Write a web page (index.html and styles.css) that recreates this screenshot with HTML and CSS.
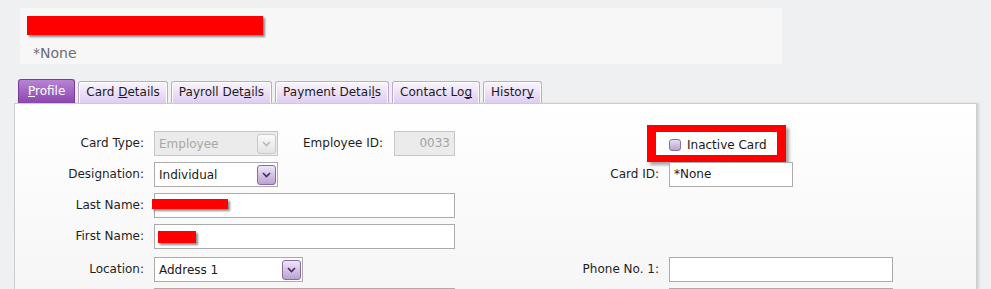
FILE: index.html
```html
<!DOCTYPE html>
<html lang="en">
<head>
    <meta charset="UTF-8">
    <meta name="viewport" content="width=device-width, initial-scale=1.0">
    <link rel="stylesheet" href="styles.css">
    <title>Card File - Profile</title>
</head>
<body>
    <!-- Card header -->
    <div class="card-header">
        <div class="redact redact-title"></div>
        <div class="card-header-sub">*None</div>
    </div>

    <!-- Tab strip -->
    <div class="tabs">
        <div class="tab tab-active"><u>P</u>rofile</div>
        <div class="tab">Card <u>D</u>etails</div>
        <div class="tab">Payroll Det<u>a</u>ils</div>
        <div class="tab">Payment Detai<u>l</u>s</div>
        <div class="tab">Contact Lo<u>g</u></div>
        <div class="tab">Histor<u>y</u></div>
    </div>

    <!-- Profile panel -->
    <div class="panel">
        <div class="form">
            <!-- row 1 -->
            <div class="lbl">Card Type:</div>
            <div class="field field-split">
                <div class="select select-disabled">
                    <span class="select-text">Employee</span>
                    <span class="drop drop-disabled">
                        <svg width="9" height="6" viewBox="0 0 9 6"><polyline points="1,1 4.5,4.5 8,1" fill="none" stroke="#b8b8b8" stroke-width="1.6"/></svg>
                    </span>
                </div>
                <div class="lbl lbl-inline">Employee ID:</div>
                <div class="input input-disabled input-id">0033</div>
            </div>
            <div></div>
            <div class="field">
                <div class="inactive">
                    <span class="checkbox"></span>
                    <span>Inactive Card</span>
                    <div class="highlight"></div>
                </div>
            </div>

            <!-- row 2 -->
            <div class="lbl">Designation:</div>
            <div class="field">
                <div class="select">
                    <span class="select-text">Individual</span>
                    <span class="drop">
                        <svg width="9" height="6" viewBox="0 0 9 6"><polyline points="1,1 4.5,4.5 8,1" fill="none" stroke="#4b2a6b" stroke-width="1.7"/></svg>
                    </span>
                </div>
            </div>
            <div class="lbl">Card ID:</div>
            <div class="field">
                <div class="input input-short">*None</div>
            </div>

            <!-- row 3 -->
            <div class="lbl">Last Name:</div>
            <div class="field">
                <div class="input input-wide">
                    <div class="redact redact-last"></div>
                </div>
            </div>
            <div></div>
            <div></div>

            <!-- row 4 -->
            <div class="lbl">First Name:</div>
            <div class="field">
                <div class="input input-wide">
                    <div class="redact redact-first"></div>
                </div>
            </div>
            <div></div>
            <div></div>

            <!-- row 5 -->
            <div class="lbl">Location:</div>
            <div class="field">
                <div class="select select-location">
                    <span class="select-text">Address 1</span>
                    <span class="drop">
                        <svg width="9" height="6" viewBox="0 0 9 6"><polyline points="1,1 4.5,4.5 8,1" fill="none" stroke="#4b2a6b" stroke-width="1.7"/></svg>
                    </span>
                </div>
            </div>
            <div class="lbl">Phone No. 1:</div>
            <div class="field">
                <div class="input input-phone"></div>
            </div>

            <!-- row 6 -->
            <div class="lbl"></div>
            <div class="field">
                <div class="input input-wide"></div>
            </div>
            <div></div>
            <div class="field">
                <div class="input input-phone"></div>
            </div>
        </div>
    </div>
</body>
</html>
```

FILE: styles.css
```css
/* Page */
body {
    margin: 0;
    background-color: #eff0f2;
    font-family: 'DejaVu Sans', Verdana, sans-serif;
    font-size: 12px;
    color: #1a1a1a;
    height: 289px;
    overflow: hidden;
}

/* Redaction bars */
.redact {
    background-color: #ff0000;
    box-shadow: 2px 2px 2px rgba(0, 0, 0, 0.45);
}

/* Card header */
.card-header {
    margin: 8px 0 0 20px;
    width: 762px;
    height: 56px;
    box-sizing: border-box;
    padding: 8px 0 0 7px;
    background-color: #f7f7f7;
}

.redact-title {
    width: 236px;
    height: 19px;
}

.card-header-sub {
    margin: 10px 0 0 6px;
    font-size: 14px;
    line-height: 16px;
    color: #6b6b76;
}

/* Tabs */
.tabs {
    display: flex;
    align-items: flex-end;
    margin: 15px 0 0 18px;
    height: 24px;
}

.tab {
    height: 22px;
    box-sizing: border-box;
    padding: 0 7px;
    margin-right: 3px;
    line-height: 21px;
    color: #1c1c1c;
    border: 1px solid #bda6d6;
    border-bottom: none;
    border-radius: 3px 3px 0 0;
    background: linear-gradient(#faf5fe, #dfcdf1);
    box-shadow: inset 1px 1px 0 #fff, inset -1px 0 0 #fff;
}

.tab u {
    text-decoration-skip-ink: none;
}

.tab-active {
    height: 24px;
    padding: 0 9px;
    line-height: 23px;
    color: #fff;
    border-color: #7a3a9c;
    background: linear-gradient(#b784d4, #8b46ad);
    box-shadow: none;
}

/* Panel */
.panel {
    margin-left: 14px;
    width: 963px;
    height: 186px;
    box-sizing: border-box;
    border: 1px solid #cdcdcd;
    border-bottom: none;
    overflow: hidden;
    background: linear-gradient(#ffffff, #f6f6f6);
    box-shadow: 2px 0 2px rgba(0, 0, 0, 0.12);
}

/* Form grid */
.form {
    display: grid;
    grid-template-columns: 129px 301px 194px 224px;
    grid-template-rows: 25px 25px 25px 27px 25px 25px;
    column-gap: 10px;
    row-gap: 6px;
    align-items: start;
    padding-top: 27px;
}

.lbl {
    height: 25px;
    line-height: 25px;
    text-align: right;
    color: #1f1f1f;
    white-space: nowrap;
}

.field {
    height: 25px;
    display: flex;
    align-items: center;
}

.field-split .lbl-inline {
    margin-left: 25px;
    width: 80px;
    text-align: left;
}

/* Inputs */
.input {
    position: relative;
    height: 25px;
    box-sizing: border-box;
    border: 1px solid #ababab;
    background-color: #fff;
    padding: 0 4px;
    line-height: 23px;
    color: #1a1a1a;
}

.input-wide {
    width: 301px;
}

.input-short {
    width: 124px;
}

.input-phone {
    width: 224px;
}

.input-id {
    margin-left: 11px;
    width: 61px;
    text-align: right;
}

.input-disabled {
    background-color: #ebebeb;
    border-color: #c6c6c6;
    color: #a3a3a3;
}

.redact-last {
    position: absolute;
    left: -3px;
    top: 5px;
    width: 76px;
    height: 10px;
}

.redact-first {
    position: absolute;
    left: 3px;
    top: 6px;
    width: 38px;
    height: 12px;
}

/* Selects */
.select {
    display: flex;
    align-items: center;
    width: 124px;
    height: 25px;
    box-sizing: border-box;
    border: 1px solid #ababab;
    background-color: #fff;
    padding-left: 4px;
}

.select-location {
    width: 149px;
}

.select-text {
    flex: 1;
}

.select-disabled {
    background-color: #ebebeb;
    border-color: #c6c6c6;
    color: #a8a8a8;
}

.drop {
    width: 19px;
    height: 20px;
    margin-right: 1px;
    box-sizing: border-box;
    display: flex;
    align-items: center;
    justify-content: center;
    border: 1px solid #8a6aa6;
    border-radius: 3px;
    background: linear-gradient(#efe6f7, #b9a2d1);
}

.drop-disabled {
    border-color: #cacaca;
    background: linear-gradient(#fafafa, #e3e3e3);
}

/* Inactive card checkbox */
.inactive {
    position: relative;
    display: flex;
    align-items: center;
    gap: 6px;
    height: 25px;
    padding-top: 3px;
    box-sizing: border-box;
    color: #1a1a1a;
}

.checkbox {
    width: 12px;
    height: 12px;
    box-sizing: border-box;
    border: 1px solid #85739b;
    border-radius: 3px;
    background: linear-gradient(#e6dcf0, #b7a5cd);
}

.highlight {
    position: absolute;
    left: -22px;
    top: -6px;
    width: 139px;
    height: 37px;
    box-sizing: border-box;
    border: solid #ff0000;
    border-width: 7px 9px 7px 9px;
    box-shadow: 3px 3px 3px rgba(0, 0, 0, 0.35);
}
```
